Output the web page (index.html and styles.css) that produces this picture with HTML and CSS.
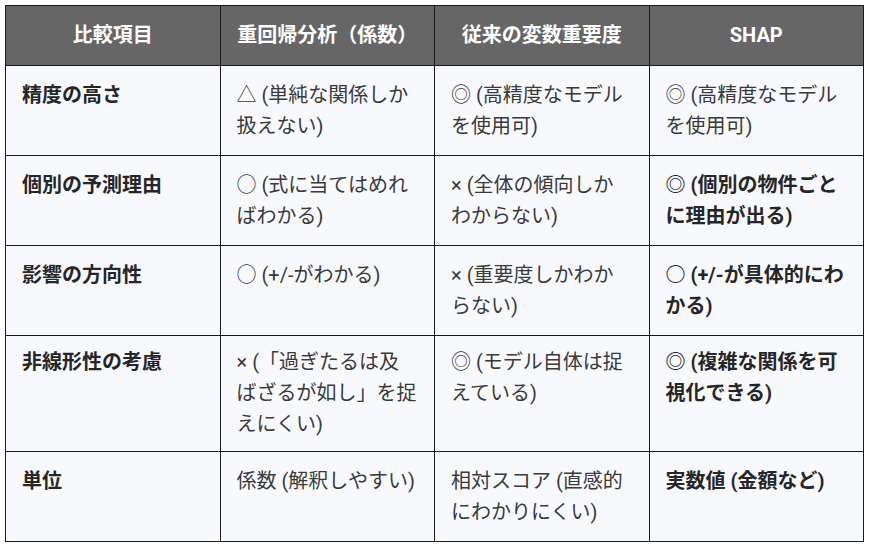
FILE: index.html
```html
<!DOCTYPE html>
<html lang="ja">
<head>
<meta charset="utf-8">
<link rel="stylesheet" href="styles.css">
</head>
<body>
<table class="cmp">
  <thead>
    <tr>
      <th>比較項目</th>
      <th>重回帰分析（係数）</th>
      <th>従来の変数重要度</th>
      <th>SHAP</th>
    </tr>
  </thead>
  <tbody>
    <tr class="r2">
      <td class="key">精度の高さ</td>
      <td>△ (単純な関係しか扱えない)</td>
      <td>◎ (高精度なモデルを使用可)</td>
      <td>◎ (高精度なモデルを使用可)</td>
    </tr>
    <tr class="r2">
      <td class="key">個別の予測理由</td>
      <td>○ (式に当てはめればわかる)</td>
      <td>× (全体の傾向しかわからない)</td>
      <td class="strong">◎ (個別の物件ごとに理由が出る)</td>
    </tr>
    <tr class="r2">
      <td class="key">影響の方向性</td>
      <td>○ (+/-がわかる)</td>
      <td>× (重要度しかわからない)</td>
      <td class="strong">○ (+/-が具体的にわかる)</td>
    </tr>
    <tr class="r3">
      <td class="key">非線形性の考慮</td>
      <td>× (「過ぎたるは及ばざるが如し」を捉えにくい)</td>
      <td>◎ (モデル自体は捉えている)</td>
      <td class="strong">◎ (複雑な関係を可視化できる)</td>
    </tr>
    <tr class="r2">
      <td class="key">単位</td>
      <td>係数 (解釈しやすい)</td>
      <td>相対スコア (直感的にわかりにくい)</td>
      <td class="strong">実数値 (金額など)</td>
    </tr>
  </tbody>
</table>
</body>
</html>
```
FILE: styles.css
```css
html, body {
  background: #ffffff;
}
body {
  margin: 5px;
  font-family: Roboto, "Noto Sans CJK JP", sans-serif;
}
.cmp {
  width: 859px;
  border-collapse: collapse;
  table-layout: fixed;
  font-size: 20px;
  line-height: 31px;
  text-spacing-trim: space-all;
}
.cmp th,
.cmp td {
  border: 1px solid #1a1a1a;
  padding: 14px 16px 13px;
  vertical-align: top;
  text-align: left;
}
.cmp th {
  background: #666666;
  color: #ffffff;
  font-weight: 700;
  text-align: center;
  padding: 14px 16px 14px;
}
.cmp td {
  background: #f8f9fd;
  color: #3a3a3a;
  font-weight: 400;
}
.cmp td.key,
.cmp td.strong {
  color: #262626;
  font-weight: 700;
}
.cmp tr.r3 td {
  padding-top: 11px;
  padding-bottom: 11px;
}
```
